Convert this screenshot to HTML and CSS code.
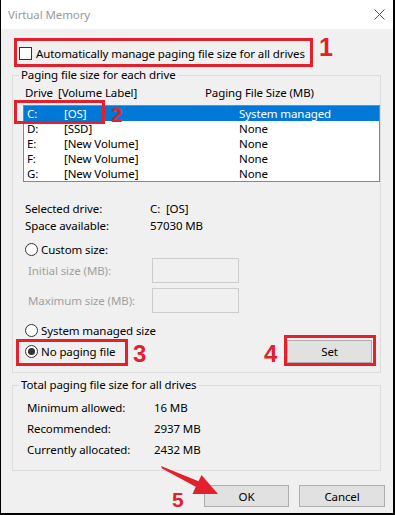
FILE: index.html
```html
<!DOCTYPE html>
<html>

<head>
    <meta charset="utf-8"/>
    <title>Virtual Memory</title>
    <link rel="stylesheet" href="styles.css">
</head>

<body>
<div class="window">
    <div class="titlebar">
        <span class="title">Virtual Memory</span>
        <svg class="close" width="11" height="11" viewBox="0 0 11 11">
            <path d="M0.5 0.5 L10.5 10.5 M10.5 0.5 L0.5 10.5" stroke="#555" stroke-width="1" fill="none"/>
        </svg>
    </div>

    <div class="content">
        <div class="check-row">
            <span class="checkbox"></span>
            <span>Automatically manage paging file size for all drives</span>
        </div>

        <fieldset class="group">
            <legend>Paging file size for each drive</legend>
            <div class="drives">
                <div class="list-head">
                    <span class="h-drive">Drive</span>
                    <span class="h-label">[Volume Label]</span>
                    <span>Paging File Size (MB)</span>
                </div>
                <div class="listbox">
                    <div class="list-row selected">
                        <span class="c-drive">C:</span><span class="c-label">[OS]</span><span>System managed</span>
                    </div>
                    <div class="list-row">
                        <span class="c-drive">D:</span><span class="c-label">[SSD]</span><span>None</span>
                    </div>
                    <div class="list-row">
                        <span class="c-drive">E:</span><span class="c-label">[New Volume]</span><span>None</span>
                    </div>
                    <div class="list-row">
                        <span class="c-drive">F:</span><span class="c-label">[New Volume]</span><span>None</span>
                    </div>
                    <div class="list-row">
                        <span class="c-drive">G:</span><span class="c-label">[New Volume]</span><span>None</span>
                    </div>
                </div>

                <div class="info">
                    <div class="info-row"><span class="info-key">Selected drive:</span><span>C:&nbsp; [OS]</span></div>
                    <div class="info-row"><span class="info-key">Space available:</span><span>57030 MB</span></div>
                </div>

                <div class="radio-row custom">
                    <span class="radio"></span><span>Custom size:</span>
                </div>
                <div class="size-row">
                    <span class="size-label">Initial size (MB):</span>
                    <span class="size-box"></span>
                </div>
                <div class="size-row second">
                    <span class="size-label">Maximum size (MB):</span>
                    <span class="size-box"></span>
                </div>
                <div class="radio-row system">
                    <span class="radio"></span><span>System managed size</span>
                </div>
                <div class="radio-row last">
                    <span class="radio on"></span><span>No paging file</span>
                    <button class="btn set">Set</button>
                </div>
            </div>
        </fieldset>

        <fieldset class="group totals-group">
            <legend>Total paging file size for all drives</legend>
            <div class="totals">
                <div class="total-row"><span class="total-key">Minimum allowed:</span><span>16 MB</span></div>
                <div class="total-row"><span class="total-key">Recommended:</span><span>2937 MB</span></div>
                <div class="total-row"><span class="total-key">Currently allocated:</span><span>2432 MB</span></div>
            </div>
        </fieldset>

        <div class="buttons">
            <button class="btn ok">OK</button>
            <button class="btn cancel">Cancel</button>
        </div>
    </div>

    <!-- tutorial annotations drawn over the dialog -->
    <div class="mark mark-1"></div>
    <div class="num num-1">1</div>
    <div class="mark mark-2"></div>
    <div class="num num-2">2</div>
    <div class="mark mark-3"></div>
    <div class="num num-3">3</div>
    <div class="mark mark-4"></div>
    <div class="num num-4">4</div>
    <div class="num num-5">5</div>
    <svg class="arrow" width="395" height="515" viewBox="0 0 395 515">
        <polygon points="160,466 197.5,481.3 200.5,475 217,494 191.5,494 194.7,486.8 161,468.5" fill="#e3202c"/>
    </svg>
</div>
</body>

</html>
```

FILE: styles.css
```css
body {
    margin: 0;
    font-family: "Noto Sans", sans-serif;
    font-size: 11.5px;
    letter-spacing: -0.1px;
    color: #000;
}

.window {
    position: relative;
    width: 395px;
    height: 515px;
    box-sizing: border-box;
    border: solid #000;
    border-width: 0 2px 2px 1px;
    background: #f0f0f0;
    display: flex;
    flex-direction: column;
}

.titlebar {
    height: 29px;
    flex: none;
    background: #fff;
    display: flex;
    align-items: center;
    justify-content: space-between;
    padding: 0 8px 0 7px;
}

.title {
    color: #999;
}

.close {
    margin-top: -1px;
}

.content {
    flex: 1;
    padding: 0 12px 0 11px;
    display: flex;
    flex-direction: column;
}

.check-row {
    display: flex;
    align-items: center;
    height: 17px;
    margin-top: 16px;
    padding-left: 7px;
}

.checkbox {
    width: 13px;
    height: 13px;
    box-sizing: border-box;
    border: 1px solid #333;
    background: #fff;
    margin-right: 4px;
}

.group {
    margin: 6px 0 0;
    padding: 0;
    border: 1px solid #dcdcdc;
    min-width: 0;
}

.group legend {
    margin-left: 6px;
    padding: 0 2px;
    line-height: 14px;
}

.drives {
    padding: 3px 0 9px 10px;
}

.list-head {
    display: flex;
    line-height: 16px;
    padding-left: 2px;
}

.h-drive {
    width: 33px;
}

.h-label {
    width: 147px;
}

.listbox {
    margin-top: 4px;
    border: 1px solid #828790;
    background: #fff;
}

.list-row {
    display: flex;
    height: 15px;
    line-height: 15px;
    padding-left: 3px;
}

.list-row.selected {
    background: #0078d7;
    color: #fff;
}

.c-drive {
    width: 37px;
}

.c-label {
    width: 175px;
}

.info {
    margin-top: 18px;
    padding-left: 2px;
}

.info-row {
    display: flex;
    line-height: 17px;
}

.info-key {
    width: 125px;
}

.radio-row {
    display: flex;
    align-items: center;
    height: 17px;
    padding-left: 2px;
}

.radio-row.custom {
    margin-top: 7px;
}

.radio-row.system {
    margin-top: 9px;
}

.radio-row.last {
    height: 23px;
    margin-top: 1px;
}

.radio {
    width: 13px;
    height: 13px;
    box-sizing: border-box;
    border: 1px solid #333;
    border-radius: 50%;
    background: #fff;
    margin-right: 3px;
    display: flex;
    align-items: center;
    justify-content: center;
}

.radio.on::after {
    content: '';
    width: 7px;
    height: 7px;
    border-radius: 50%;
    background: #333;
}

.size-row {
    display: flex;
    align-items: center;
    padding-left: 5px;
    color: #a0a0a0;
}

.size-row.second {
    margin-top: 5px;
}

.size-label {
    width: 124px;
}

.size-box {
    width: 87px;
    height: 25px;
    box-sizing: border-box;
    border: 1px solid #ccc;
    background: #f0f0f0;
}

.btn {
    width: 85px;
    height: 23px;
    box-sizing: border-box;
    padding: 0;
    border: 1px solid #adadad;
    background: #e1e1e1;
    font-family: inherit;
    font-size: 11.5px;
    letter-spacing: -0.1px;
    color: #000;
}

.btn.set {
    margin-left: auto;
    margin-right: 8px;
}

.totals-group {
    margin-top: 5px;
}

.totals {
    padding: 5px 0 10px 14px;
}

.total-row {
    display: flex;
    line-height: 21px;
}

.total-key {
    width: 127px;
}

.buttons {
    display: flex;
    justify-content: flex-end;
    gap: 10px;
    margin-top: 14px;
    margin-right: -4px;
}

.btn.ok,
.btn.cancel {
    height: 22px;
}

.btn.cancel {
    width: 86px;
}

.mark {
    position: absolute;
    box-sizing: border-box;
    border: 3px solid #e3202c;
}

.mark-1 {
    left: 13px;
    top: 38px;
    width: 299px;
    height: 29px;
}

.mark-2 {
    left: 13px;
    top: 100px;
    width: 91px;
    height: 24px;
}

.mark-3 {
    left: 15px;
    top: 339px;
    width: 112px;
    height: 27px;
}

.mark-4 {
    left: 283px;
    top: 335px;
    width: 92px;
    height: 31px;
}

.num {
    position: absolute;
    font-family: "Liberation Sans", Arial, sans-serif;
    font-weight: bold;
    letter-spacing: 0;
    color: #e3202c;
    line-height: 1;
}

.num-1 {
    left: 318px;
    top: 35px;
    font-size: 25px;
}

.num-2 {
    left: 110px;
    top: 104px;
    font-size: 21px;
}

.num-3 {
    left: 132px;
    top: 342px;
    font-size: 24px;
}

.num-4 {
    left: 263px;
    top: 342px;
    font-size: 24px;
}

.num-5 {
    left: 171px;
    top: 489px;
    font-size: 21px;
}

.arrow {
    position: absolute;
    left: 0;
    top: 0;
    pointer-events: none;
}
```
